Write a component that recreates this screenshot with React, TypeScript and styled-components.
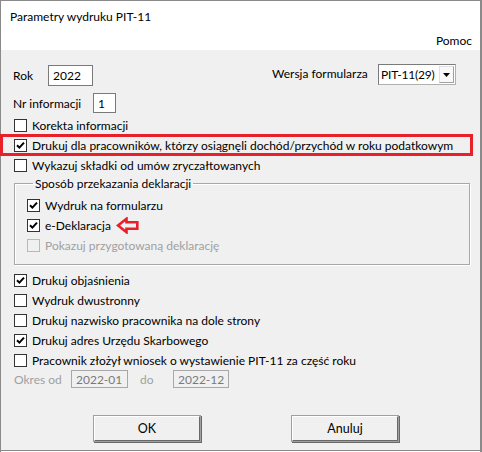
import React from 'react';
import styled, { createGlobalStyle } from 'styled-components';

const GlobalStyle = createGlobalStyle`
  html, body {
    margin: 0;
    padding: 0;
    background: #ffffff;
  }
  body {
    font-family: Lato, 'Liberation Sans', sans-serif;
    font-size: 12px;
    color: #000;
  }
`;

const Window = styled.div`
  width: 482px;
  height: 452px;
  box-sizing: border-box;
  border: 1px solid #8a8a8a;
  border-right-width: 2px;
  border-bottom: none;
  display: flex;
  flex-direction: column;
  background: #ffffff;
`;

const TitleBar = styled.div`
  height: 29px;
  display: flex;
  align-items: center;
  padding-left: 9px;
  padding-top: 1px;
  background: #ffffff;
`;

const MenuBar = styled.div`
  height: 19px;
  display: flex;
  justify-content: flex-end;
  align-items: center;
  padding-right: 8px;
  background: #ffffff;
`;

const Body = styled.div`
  flex: 1;
  background: #f0f0f0;
  border-bottom: 1px solid #8a8a8a;
  margin-bottom: 1px;
  padding: 15px 0 0 12px;
  display: flex;
  flex-direction: column;
`;

const FieldRow = styled.div<{ $height: number; $top?: number; $bottom?: number }>`
  display: flex;
  align-items: center;
  height: ${(p) => p.$height}px;
  margin-top: ${(p) => p.$top ?? 0}px;
  margin-bottom: ${(p) => p.$bottom ?? 0}px;
`;

const Label = styled.span<{ $width?: number; $disabled?: boolean; $lift?: number }>`
  width: ${(p) => (p.$width ? `${p.$width}px` : 'auto')};
  flex-shrink: 0;
  white-space: nowrap;
  color: ${(p) => (p.$disabled ? '#a0a0a0' : '#000')};
  position: relative;
  top: ${(p) => -(p.$lift ?? 0)}px;
`;

const TextBox = styled.div<{ $width: number; $height: number; $disabled?: boolean }>`
  width: ${(p) => p.$width}px;
  height: ${(p) => p.$height}px;
  box-sizing: border-box;
  border: 1px solid ${(p) => (p.$disabled ? '#a8a8a8' : '#7a7a7a')};
  background: ${(p) => (p.$disabled ? '#f0f0f0' : '#ffffff')};
  color: ${(p) => (p.$disabled ? '#7a7a7a' : '#000')};
  display: flex;
  align-items: center;
  padding-left: 4px;
  flex-shrink: 0;
  white-space: nowrap;
`;

const Select = styled.div`
  width: 78px;
  height: 21px;
  box-sizing: border-box;
  border: 1px solid #7a7a7a;
  border-right-color: #b0b0b0;
  border-bottom-color: #b0b0b0;
  background: #ffffff;
  display: flex;
  align-items: center;
  padding: 0 1px 0 2px;
  position: relative;
  top: -1px;
`;

const SelectText = styled.span`
  flex: 1;
  white-space: nowrap;
  overflow: hidden;
  letter-spacing: -0.2px;
`;

const SelectButton = styled.div`
  width: 15px;
  height: 17px;
  flex-shrink: 0;
  box-sizing: border-box;
  border: 1px solid #e0e0e0;
  border-right-color: #a0a0a0;
  border-bottom-color: #a0a0a0;
  background: #f8f8f8;
  display: flex;
  align-items: center;
  justify-content: center;
`;

const CheckRow = styled.label<{ $disabled?: boolean; $highlight?: boolean }>`
  display: flex;
  align-items: center;
  height: 20px;
  padding-left: 1px;
  gap: 5px;
  white-space: nowrap;
  color: ${(p) => (p.$disabled ? '#a0a0a0' : '#000')};
  position: relative;

  ${(p) =>
    p.$highlight &&
    `
    &::after {
      content: '';
      position: absolute;
      left: -13px;
      width: 473px;
      top: -1px;
      height: 22px;
      box-sizing: border-box;
      border: 3px solid #e8202a;
      pointer-events: none;
    }
  `}
`;

const Box = styled.span<{ $disabled?: boolean }>`
  width: 13px;
  height: 13px;
  box-sizing: border-box;
  border: 1px solid ${(p) => (p.$disabled ? '#b8b8b8' : '#333333')};
  background: ${(p) => (p.$disabled ? '#f0f0f0' : '#ffffff')};
  display: flex;
  align-items: center;
  justify-content: center;
  flex-shrink: 0;
`;

const Group = styled.fieldset`
  width: 456px;
  box-sizing: border-box;
  margin: 1px 0 5px 1px;
  padding: 4px 0 9px 11px;
  border: 1px solid #a8a8a8;
  box-shadow: 1px 1px 0 #ffffff, inset 1px 1px 0 #ffffff;
`;

const Legend = styled.legend`
  margin-left: 7px;
  padding: 0 2px;
  line-height: 15px;
`;

const ArrowMark = styled.svg`
  flex-shrink: 0;
`;

const ButtonRow = styled.div`
  display: flex;
  gap: 92px;
  padding-left: 81px;
  margin-top: 28px;
`;

const Button = styled.button`
  width: 106px;
  height: 25px;
  box-sizing: border-box;
  font-family: inherit;
  font-size: 12.5px;
  color: #000;
  background: #f0f0f0;
  border: 1px solid;
  border-color: #ffffff #696969 #696969 #ffffff;
  box-shadow: 0 0 0 1px #a0a0a0, 1px 1px 0 1px #696969;
  padding: 0;
`;

const CheckMark = () => (
  <svg width="9" height="9" viewBox="0 0 9 9">
    <path d="M1 4.2 L3.4 6.6 L8 1.6" fill="none" stroke="#000" strokeWidth="2" />
  </svg>
);

type CheckProps = {
  label: string;
  checked?: boolean;
  disabled?: boolean;
  highlight?: boolean;
  children?: React.ReactNode;
};

const Check = ({ label, checked, disabled, highlight, children }: CheckProps) => (
  <CheckRow $disabled={disabled} $highlight={highlight}>
    <Box $disabled={disabled}>{checked && <CheckMark />}</Box>
    <span>{label}</span>
    {children}
  </CheckRow>
);

const App = () => {
  return (
    <>
      <GlobalStyle />
      <Window>
        <TitleBar>Parametry wydruku PIT-11</TitleBar>
        <MenuBar>Pomoc</MenuBar>
        <Body>
          <FieldRow $height={21}>
            <Label $width={35}>Rok</Label>
            <TextBox $width={45} $height={21}>
              2022
            </TextBox>
            <Label $width={106} $lift={2} style={{ marginLeft: 179 }}>
              Wersja formularza
            </Label>
            <Select>
              <SelectText>PIT-11(29)</SelectText>
              <SelectButton>
                <svg width="7" height="4" viewBox="0 0 7 4">
                  <path d="M0 0 H7 L3.5 4 Z" fill="#000" />
                </svg>
              </SelectButton>
            </Select>
          </FieldRow>
          <FieldRow $height={20} $top={7} $bottom={2}>
            <Label $width={80}>Nr informacji</Label>
            <TextBox $width={23} $height={20}>
              1
            </TextBox>
          </FieldRow>
          <Check label="Korekta informacji" />
          <Check
            label="Drukuj dla pracowników, którzy osiągnęli dochód/przychód w roku podatkowym"
            checked
            highlight
          />
          <Check label="Wykazuj składki od umów zryczałtowanych" />
          <Group>
            <Legend>Sposób przekazania deklaracji</Legend>
            <Check label="Wydruk na formularzu" checked />
            <Check label="e-Deklaracja" checked>
              <ArrowMark width="23" height="17" viewBox="0 0 23 17">
                <path
                  d="M2 8.5 L10.5 1.8 L10.5 5.2 L21.3 5.2 L21.3 11.8 L10.5 11.8 L10.5 15.2 Z"
                  fill="none"
                  stroke="#e8202a"
                  strokeWidth="2.6"
                  strokeLinejoin="miter"
                />
              </ArrowMark>
            </Check>
            <Check label="Pokazuj przygotowaną deklarację" disabled />
          </Group>
          <Check label="Drukuj objaśnienia" checked />
          <Check label="Wydruk dwustronny" />
          <Check label="Drukuj nazwisko pracownika na dole strony" />
          <Check label="Drukuj adres Urzędu Skarbowego" checked />
          <Check label="Pracownik złożył wniosek o wystawienie PIT-11 za część roku" />
          <FieldRow $height={18}>
            <Label $width={57} $disabled style={{ marginLeft: 1 }}>
              Okres od
            </Label>
            <TextBox $width={57} $height={18} $disabled>
              2022-01
            </TextBox>
            <Label $width={33} $disabled style={{ paddingLeft: 12 }}>
              do
            </Label>
            <TextBox $width={56} $height={18} $disabled>
              2022-12
            </TextBox>
          </FieldRow>
          <ButtonRow>
            <Button>OK</Button>
            <Button>Anuluj</Button>
          </ButtonRow>
        </Body>
      </Window>
    </>
  );
};

export default App;
